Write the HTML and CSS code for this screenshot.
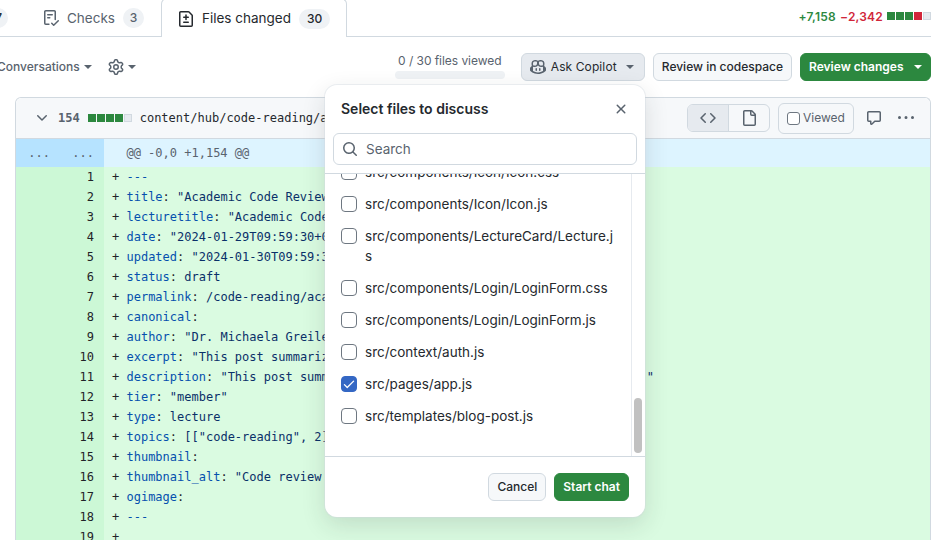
FILE: index.html
```html
<!DOCTYPE html>
<html lang="en">

<head>
    <meta charset="UTF-8">
    <meta name="viewport" content="width=device-width, initial-scale=1.0">
    <title>Files changed</title>
    <link rel="stylesheet" href="styles.css">
</head>

<body>
    <div class="page">
        <div class="tabbar">
            <span class="counter clipped">7</span>
            <div class="tab">
                <svg class="icon" viewBox="0 0 16 16"><path d="M2.5 1.75v11.5c0 .138.112.25.25.25h3.17a.75.75 0 0 1 0 1.5H2.75A1.75 1.75 0 0 1 1 13.25V1.75C1 .784 1.784 0 2.75 0h8.5C12.216 0 13 .784 13 1.75v7.736a.75.75 0 0 1-1.5 0V1.75a.25.25 0 0 0-.25-.25h-8.5a.25.25 0 0 0-.25.25Zm13.274 9.537v-.001l-4.557 4.45a.75.75 0 0 1-1.055-.008l-1.943-1.95a.75.75 0 0 1 1.062-1.058l1.419 1.425 4.026-3.932a.75.75 0 1 1 1.048 1.074ZM4.75 4h4.5a.75.75 0 0 1 0 1.5h-4.5a.75.75 0 0 1 0-1.5ZM4 7.75A.75.75 0 0 1 4.75 7h2a.75.75 0 0 1 0 1.5h-2A.75.75 0 0 1 4 7.75Z"/></svg>
                <span>Checks</span>
                <span class="counter">3</span>
            </div>
            <div class="tab selected">
                <svg class="icon" viewBox="0 0 16 16"><path d="M1 1.75C1 .784 1.784 0 2.75 0h7.586c.464 0 .909.184 1.237.513l2.914 2.914c.329.328.513.773.513 1.237v9.586A1.75 1.75 0 0 1 13.25 16H2.75A1.75 1.75 0 0 1 1 14.25Zm1.75-.25a.25.25 0 0 0-.25.25v12.5c0 .138.112.25.25.25h10.5a.25.25 0 0 0 .25-.25V4.664a.25.25 0 0 0-.073-.177l-2.914-2.914a.25.25 0 0 0-.177-.073ZM8 3.25a.75.75 0 0 1 .75.75v1.5h1.5a.75.75 0 0 1 0 1.5h-1.5v1.5a.75.75 0 0 1-1.5 0V7h-1.5a.75.75 0 0 1 0-1.5h1.5V4A.75.75 0 0 1 8 3.25Zm-3 8a.75.75 0 0 1 .75-.75h4.5a.75.75 0 0 1 0 1.5h-4.5a.75.75 0 0 1-.75-.75Z"/></svg>
                <span class="btn-text">Files changed</span>
                <span class="counter">30</span>
            </div>
            <div class="stats">
                <span class="plus">+7,158</span>
                <span class="minus">−2,342</span>
                <span class="bars">
                    <i class="g"></i><i class="g"></i><i class="g"></i><i class="r"></i><i></i>
                </span>
            </div>
        </div>

        <div class="toolbar">
            <span class="conv">Conversations<b class="caret"></b></span>
            <span class="gear">
                <svg class="icon" viewBox="0 0 16 16"><path d="M8 0a8.2 8.2 0 0 1 .701.031C9.444.095 9.99.645 10.16 1.29l.288 1.107c.018.066.079.158.212.224.231.114.454.243.668.386.123.082.233.09.299.071l1.103-.303c.644-.176 1.392.021 1.82.63.27.385.506.792.704 1.218.315.675.111 1.422-.364 1.891l-.814.806c-.049.048-.098.147-.088.294.016.257.016.515 0 .772-.01.147.038.246.088.294l.814.806c.475.469.679 1.216.364 1.891a7.977 7.977 0 0 1-.704 1.217c-.428.61-1.176.807-1.82.63l-1.102-.302c-.067-.019-.177-.011-.3.071a5.909 5.909 0 0 1-.668.386c-.133.066-.194.158-.211.224l-.29 1.106c-.168.646-.715 1.196-1.458 1.26a8.006 8.006 0 0 1-1.402 0c-.743-.064-1.289-.614-1.458-1.26l-.289-1.106c-.018-.066-.079-.158-.212-.224a5.738 5.738 0 0 1-.668-.386c-.123-.082-.233-.09-.299-.071l-1.103.303c-.644.176-1.392-.021-1.82-.63a8.12 8.12 0 0 1-.704-1.218c-.315-.675-.111-1.422.363-1.891l.815-.806c.05-.048.098-.147.088-.294a6.214 6.214 0 0 1 0-.772c.01-.147-.038-.246-.088-.294l-.815-.806C.635 6.045.431 5.298.746 4.623a7.92 7.92 0 0 1 .704-1.217c.428-.61 1.176-.807 1.82-.63l1.102.302c.067.019.177.011.3-.071.214-.143.437-.272.668-.386.133-.066.194-.158.211-.224l.29-1.106C6.009.645 6.556.095 7.299.03 7.53.01 7.764 0 8 0Zm-.571 1.525c-.036.003-.108.036-.137.146l-.289 1.105c-.147.561-.549.967-.998 1.189-.173.086-.34.183-.5.29-.417.278-.97.423-1.529.27l-1.103-.303c-.109-.03-.175.016-.195.045-.22.312-.412.644-.573.99-.014.031-.021.11.059.19l.815.806c.411.406.562.957.53 1.456a4.709 4.709 0 0 0 0 .582c.032.499-.119 1.05-.53 1.456l-.815.806c-.081.08-.073.159-.059.19.162.346.353.677.573.989.02.03.085.076.195.046l1.102-.303c.56-.153 1.113-.008 1.53.27.161.107.328.204.501.29.447.222.85.629.997 1.189l.289 1.105c.029.109.101.143.137.146a6.6 6.6 0 0 0 1.142 0c.036-.003.108-.036.137-.146l.289-1.105c.147-.561.549-.967.998-1.189.173-.086.34-.183.5-.29.417-.278.97-.423 1.529-.27l1.103.303c.109.029.175-.016.195-.045.22-.313.411-.644.573-.99.014-.031.021-.11-.059-.19l-.815-.806c-.411-.406-.562-.957-.53-1.456a4.709 4.709 0 0 0 0-.582c-.032-.499.119-1.05.53-1.456l.815-.806c.081-.08.073-.159.059-.19a6.464 6.464 0 0 0-.573-.989c-.02-.03-.085-.076-.195-.046l-1.102.303c-.56.153-1.113.008-1.53-.27a4.44 4.44 0 0 0-.501-.29c-.447-.222-.85-.629-.997-1.189l-.289-1.105c-.029-.11-.101-.143-.137-.146a6.6 6.6 0 0 0-1.142 0ZM11 8a3 3 0 1 1-6 0 3 3 0 0 1 6 0ZM9.5 8a1.5 1.5 0 1 0-3.001.001A1.5 1.5 0 0 0 9.5 8Z"/></svg>
                <b class="caret"></b>
            </span>
            <div class="progress">
                <span>0 / 30 files viewed</span>
                <div class="track"></div>
            </div>
            <button class="btn open copilot">
                <svg class="icon" viewBox="0 0 16 16"><path d="M7.998 15.035c-4.562 0-7.873-2.914-7.998-3.749V9.338c.085-.628.677-1.686 1.588-2.065.013-.07.024-.143.036-.218.029-.183.06-.384.126-.612-.201-.508-.254-1.084-.254-1.656 0-.87.128-1.769.693-2.484.579-.733 1.494-1.124 2.724-1.261 1.206-.134 2.262.034 2.944.765.05.053.096.108.139.165.044-.057.094-.112.143-.165.682-.731 1.738-.899 2.944-.765 1.23.137 2.145.528 2.724 1.261.566.715.693 1.614.693 2.484 0 .572-.053 1.148-.254 1.656.066.228.098.429.126.612.012.076.024.148.037.218.924.385 1.522 1.471 1.591 2.095v1.872c0 .766-3.351 3.795-8.002 3.795Zm0-1.485c2.28 0 4.584-1.11 5.002-1.433V7.862l-.023-.116c-.49.21-1.075.291-1.727.291-1.146 0-2.059-.327-2.71-.991A3.222 3.222 0 0 1 8 6.303a3.24 3.24 0 0 1-.544.743c-.65.664-1.563.991-2.71.991-.652 0-1.236-.081-1.727-.291l-.023.116v4.255c.419.323 2.722 1.433 5.002 1.433ZM6.762 2.83c-.193-.206-.637-.413-1.682-.297-1.019.113-1.479.404-1.713.7-.247.312-.369.789-.369 1.554 0 .793.129 1.171.308 1.371.162.181.519.379 1.442.379.853 0 1.339-.235 1.638-.54.315-.322.527-.827.617-1.553.117-.935-.037-1.395-.241-1.614Zm4.155-.297c-1.044-.116-1.488.091-1.681.297-.204.219-.359.679-.242 1.614.091.726.303 1.231.618 1.553.299.305.784.54 1.638.54.922 0 1.28-.198 1.442-.379.179-.2.308-.578.308-1.371 0-.765-.123-1.242-.37-1.554-.233-.296-.693-.587-1.713-.7Z M6.25 9.037a.75.75 0 0 1 .75.75v1.501a.75.75 0 0 1-1.5 0V9.787a.75.75 0 0 1 .75-.75Zm4.25.75v1.501a.75.75 0 0 1-1.5 0V9.787a.75.75 0 0 1 1.5 0Z"/></svg>
                <span class="btn-text">Ask Copilot</span><b class="caret"></b>
            </button>
            <button class="btn"><span class="btn-text">Review in codespace</span></button>
            <button class="btn green review"><span class="btn-text">Review changes</span><b class="caret"></b></button>
        </div>

        <div class="file">
            <div class="file-head">
                <svg class="icon chevron" viewBox="0 0 16 16"><path d="M12.78 5.22a.749.749 0 0 1 0 1.06l-4.25 4.25a.749.749 0 0 1-1.06 0L3.22 6.28a.749.749 0 1 1 1.06-1.06L8 8.939l3.72-3.719a.749.749 0 0 1 1.06 0Z"/></svg>
                <span class="num">154</span>
                <span class="bars"><i class="g"></i><i class="g"></i><i class="g"></i><i class="g"></i><i></i></span>
                <span class="path">content/hub/code-reading/academic-code-review.md</span>
                <div class="seg">
                    <span class="on"><svg class="icon" viewBox="0 0 16 16"><path d="m11.28 3.22 4.25 4.25a.75.75 0 0 1 0 1.06l-4.25 4.25a.749.749 0 0 1-1.275-.326.749.749 0 0 1 .215-.734L13.94 8l-3.72-3.72a.749.749 0 0 1 .326-1.275.749.749 0 0 1 .734.215Zm-6.56 0a.751.751 0 0 1 1.042.018.751.751 0 0 1 .018 1.042L2.06 8l3.72 3.72a.749.749 0 0 1-.326 1.275.749.749 0 0 1-.734-.215L.47 8.53a.75.75 0 0 1 0-1.06Z"/></svg></span>
                    <span><svg class="icon" viewBox="0 0 16 16"><path d="M2 1.75C2 .784 2.784 0 3.75 0h6.586c.464 0 .909.184 1.237.513l2.914 2.914c.329.328.513.773.513 1.237v9.586A1.75 1.75 0 0 1 13.25 16h-9.5A1.75 1.75 0 0 1 2 14.25Zm1.75-.25a.25.25 0 0 0-.25.25v12.5c0 .138.112.25.25.25h9.5a.25.25 0 0 0 .25-.25V6h-2.75A1.75 1.75 0 0 1 9 4.25V1.5Zm6.75.062V4.25c0 .138.112.25.25.25h2.688l-.011-.013-2.914-2.914-.013-.011Z"/></svg></span>
                </div>
                <div class="viewed"><span class="box small"></span><span class="btn-text">Viewed</span></div>
                <svg class="icon comment" viewBox="0 0 16 16"><path d="M1 2.75C1 1.784 1.784 1 2.75 1h10.5c.966 0 1.75.784 1.75 1.75v7.5A1.75 1.75 0 0 1 13.25 12H9.06l-2.573 2.573A1.458 1.458 0 0 1 4 13.543V12H2.75A1.75 1.75 0 0 1 1 10.25Zm1.75-.25a.25.25 0 0 0-.25.25v7.5c0 .138.112.25.25.25h2a.75.75 0 0 1 .75.75v2.19l2.72-2.72a.749.749 0 0 1 .53-.22h4.5a.25.25 0 0 0 .25-.25v-7.5a.25.25 0 0 0-.25-.25Z"/></svg>
                <svg class="icon kebab" viewBox="0 0 16 16"><path d="M8 9a1.5 1.5 0 1 0 0-3 1.5 1.5 0 0 0 0 3ZM1.5 9a1.5 1.5 0 1 0 0-3 1.5 1.5 0 0 0 0 3Zm13 0a1.5 1.5 0 1 0 0-3 1.5 1.5 0 0 0 0 3Z"/></svg>
            </div>

            <div class="row hunk"><span class="n">...</span><span class="n">...</span><span class="code">  @@ -0,0 +1,154 @@</span></div>
            <div class="row"><span class="n"></span><span class="n">1</span><span class="code"><i>+</i> <em>---</em></span></div>
            <div class="row"><span class="n"></span><span class="n">2</span><span class="code"><i>+</i> <em>title</em><i>:</i> "Academic Code Review"</span></div>
            <div class="row"><span class="n"></span><span class="n">3</span><span class="code"><i>+</i> <em>lecturetitle</em><i>:</i> "Academic Code Review"</span></div>
            <div class="row"><span class="n"></span><span class="n">4</span><span class="code"><i>+</i> <em>date</em><i>:</i> "2024-01-29T09:59:30+01:00"</span></div>
            <div class="row"><span class="n"></span><span class="n">5</span><span class="code"><i>+</i> <em>updated</em><i>:</i> "2024-01-30T09:59:30+01:00"</span></div>
            <div class="row"><span class="n"></span><span class="n">6</span><span class="code"><i>+</i> <em>status</em><i>:</i> draft</span></div>
            <div class="row"><span class="n"></span><span class="n">7</span><span class="code"><i>+</i> <em>permalink</em><i>:</i> /code-reading/academic-code-review</span></div>
            <div class="row"><span class="n"></span><span class="n">8</span><span class="code"><i>+</i> <em>canonical</em><i>:</i></span></div>
            <div class="row"><span class="n"></span><span class="n">9</span><span class="code"><i>+</i> <em>author</em><i>:</i> "Dr. Michaela Greiler"</span></div>
            <div class="row"><span class="n"></span><span class="n">10</span><span class="code"><i>+</i> <em>excerpt</em><i>:</i> "This post summarizes the lecture in short"</span></div>
            <div class="row"><span class="n"></span><span class="n">11</span><span class="code"><i>+</i> <em>description</em><i>:</i> "This post summarizes the code reading lecture in this hub."</span></div>
            <div class="row"><span class="n"></span><span class="n">12</span><span class="code"><i>+</i> <em>tier</em><i>:</i> "member"</span></div>
            <div class="row"><span class="n"></span><span class="n">13</span><span class="code"><i>+</i> <em>type</em><i>:</i> lecture</span></div>
            <div class="row"><span class="n"></span><span class="n">14</span><span class="code"><i>+</i> <em>topics</em><i>:</i> [["code-reading", 2]]</span></div>
            <div class="row"><span class="n"></span><span class="n">15</span><span class="code"><i>+</i> <em>thumbnail</em><i>:</i></span></div>
            <div class="row"><span class="n"></span><span class="n">16</span><span class="code"><i>+</i> <em>thumbnail_alt</em><i>:</i> "Code review lecture"</span></div>
            <div class="row"><span class="n"></span><span class="n">17</span><span class="code"><i>+</i> <em>ogimage</em><i>:</i></span></div>
            <div class="row"><span class="n"></span><span class="n">18</span><span class="code"><i>+</i> <em>---</em></span></div>
            <div class="row"><span class="n"></span><span class="n">19</span><span class="code"><i>+</i></span></div>
        </div>
    </div>

    <div class="popover">
        <div class="pop-head">
            <h2>Select files to discuss</h2>
            <svg class="icon" viewBox="0 0 16 16"><path d="M3.72 3.72a.75.75 0 0 1 1.06 0L8 6.94l3.22-3.22a.749.749 0 0 1 1.275.326.749.749 0 0 1-.215.734L9.06 8l3.22 3.22a.749.749 0 0 1-.326 1.275.749.749 0 0 1-.734-.215L8 9.06l-3.22 3.22a.751.751 0 0 1-1.042-.018.751.751 0 0 1-.018-1.042L6.94 8 3.72 4.78a.75.75 0 0 1 0-1.06Z"/></svg>
        </div>
        <div class="search-wrap">
            <div class="search">
                <svg class="icon" viewBox="0 0 16 16"><path d="M10.68 11.74a6 6 0 0 1-7.922-8.982 6 6 0 0 1 8.982 7.922l3.04 3.04a.749.749 0 0 1-.326 1.275.749.749 0 0 1-.734-.215ZM11.5 7a4.499 4.499 0 1 0-8.997 0A4.499 4.499 0 0 0 11.5 7Z"/></svg>
                <span>Search</span>
            </div>
        </div>
        <div class="scroll">
            <div class="list-view">
                <ul class="list">
                    <li><span class="box"></span><span>src/components/Icon/Icon.css</span></li>
                    <li><span class="box"></span><span>src/components/Icon/Icon.js</span></li>
                    <li><span class="box"></span><span>src/components/LectureCard/Lecture.js</span></li>
                    <li><span class="box"></span><span>src/components/Login/LoginForm.css</span></li>
                    <li><span class="box"></span><span>src/components/Login/LoginForm.js</span></li>
                    <li><span class="box"></span><span>src/context/auth.js</span></li>
                    <li>
                        <span class="box checked"><svg viewBox="0 0 16 16"><path d="M13.78 4.22a.75.75 0 0 1 0 1.06l-7.25 7.25a.75.75 0 0 1-1.06 0L2.22 9.28a.751.751 0 0 1 .018-1.042.751.751 0 0 1 1.042-.018L6 10.94l6.72-6.72a.75.75 0 0 1 1.06 0Z"/></svg></span>
                        <span>src/pages/app.js</span>
                    </li>
                    <li><span class="box"></span><span>src/templates/blog-post.js</span></li>
                </ul>
            </div>
            <div class="scrollbar"><div class="thumb"></div></div>
        </div>
        <div class="pop-foot">
            <button class="btn"><span class="btn-text">Cancel</span></button>
            <button class="btn green"><span class="btn-text">Start chat</span></button>
        </div>
    </div>
</body>

</html>
```

FILE: styles.css
```css
* {
    margin: 0;
    padding: 0;
    box-sizing: border-box;
}

html,
body {
    height: 540px;
    overflow: hidden;
}

body {
    position: relative;
    background-color: white;
    color: #25292e;
    font-family: Inter, "Liberation Sans", sans-serif;
    font-size: 13.5px;
}

.page {
    padding-right: 3px;
}

.icon {
    width: 16px;
    height: 16px;
    fill: currentColor;
    flex: none;
}

.btn-text {
    position: relative;
    top: -1px;
}

/* tabs */
.tabbar {
    height: 37px;
    display: flex;
    align-items: center;
    border-bottom: 1px solid #d1d9e0;
}

.counter {
    display: inline-block;
    min-width: 21px;
    height: 20px;
    padding: 0 8px;
    border-radius: 10px;
    background-color: #eff2f5;
    font-size: 12px;
    font-weight: 500;
    line-height: 20px;
    text-align: center;
}

.counter.clipped {
    width: 24px;
    margin-left: -16px;
    padding: 0 6px 0 0;
    text-align: right;
}

.tab {
    display: flex;
    align-items: center;
    gap: 8px;
    height: 37px;
    padding: 0 17px;
    color: #59636e;
}

.tab:first-of-type {
    margin-left: 18px;
}

.tab .counter {
    padding: 0 6px;
    color: #59636e;
}

.tab.selected {
    height: 39px;
    margin: -2px 0 -1px 0;
    padding: 1px 16px 0;
    background-color: white;
    border: 1px solid #d1d9e0;
    border-bottom: 0;
    border-radius: 6px 6px 0 0;
    color: #25292e;
}

.tab.selected .counter {
    padding: 0 8px;
    color: #25292e;
}

.stats {
    margin-left: auto;
    padding-bottom: 4px;
    display: flex;
    align-items: center;
    gap: 4px;
    font-size: 12px;
    font-weight: 600;
    letter-spacing: 0.2px;
}

.plus {
    color: #2c883f;
}

.minus {
    color: #d1263a;
}

.bars {
    display: inline-flex;
    gap: 1px;
}

.bars i {
    width: 8px;
    height: 8px;
    background-color: #e6eaef;
    border: 1px solid #d1d9e0;
}

.bars i.g {
    background-color: #2c883f;
    border: 0;
}

.bars i.r {
    background-color: #d1263a;
    border: 0;
}

/* toolbar */
.toolbar {
    height: 60px;
    display: flex;
    align-items: center;
    color: #59636e;
    font-size: 12px;
}

.caret {
    display: inline-block;
    width: 0;
    height: 0;
    margin-left: 4px;
    vertical-align: middle;
    border-top: 4px solid currentColor;
    border-left: 4px solid transparent;
    border-right: 4px solid transparent;
}

.conv {
    margin-left: -3px;
    padding-bottom: 2px;
    font-weight: 500;
    white-space: nowrap;
}

.gear {
    display: flex;
    align-items: center;
    margin-left: 16px;
}

.progress {
    width: 110px;
    margin-left: auto;
    margin-right: 16px;
    display: flex;
    flex-direction: column;
    align-items: center;
    gap: 3px;
    margin-top: -2px;
    letter-spacing: -0.05px;
}

.track {
    width: 100%;
    height: 8px;
    border-radius: 4px;
    background-color: #eff2f5;
}

.btn {
    height: 28px;
    padding: 0 8px;
    border: 1px solid #d1d9e0;
    border-radius: 6px;
    background-color: #f6f8fa;
    color: #25292e;
    font-family: inherit;
    font-size: 12px;
    font-weight: 500;
    white-space: nowrap;
}

.toolbar .btn {
    margin-left: 8px;
}

.toolbar .btn:first-of-type {
    margin-left: 0;
}

.btn.open {
    background-color: #e6eaef;
}

.copilot {
    display: flex;
    align-items: center;
    width: 124px;
    gap: 4px;
}

.copilot .icon {
    color: #59636e;
    margin-right: 1px;
}

.copilot .btn-text {
    font-weight: 400;
    letter-spacing: 0.1px;
}

.copilot .caret {
    margin-left: 5px;
    color: #59636e;
}

.btn.green {
    background-color: #2c883f;
    border-color: #2c883f;
    color: white;
    font-weight: 600;
}

.review {
    width: 131px;
    display: flex;
    align-items: center;
    justify-content: space-between;
}

.review .caret {
    color: white;
}

/* diff */
.file {
    margin-left: 15px;
    border: 1px solid #d1d9e0;
    border-bottom: 0;
    border-radius: 6px 6px 0 0;
    font-family: "DejaVu Sans Mono", "Liberation Mono", monospace;
    font-size: 12px;
}

.file-head {
    height: 41px;
    display: flex;
    align-items: center;
    padding-right: 16px;
    background-color: #f6f8fa;
    border-bottom: 1px solid #d1d9e0;
    border-radius: 6px 6px 0 0;
}

.chevron {
    margin-left: 18px;
    color: #59636e;
}

.num {
    margin-left: 8px;
    color: #59636e;
    font-weight: bold;
}

.file-head .bars {
    margin-left: 8px;
}

.file-head .path {
    margin-left: 8px;
    white-space: nowrap;
    flex: 1;
    overflow: hidden;
}

.seg {
    display: flex;
    height: 28px;
    margin-left: 8px;
    border: 1px solid #d1d9e0;
    border-radius: 6px;
    color: #59636e;
}

.seg span {
    width: 40px;
    display: flex;
    align-items: center;
    justify-content: center;
}

.seg .on {
    width: 41px;
    background-color: #e6eaef;
    border-right: 1px solid #d1d9e0;
    border-radius: 5px 0 0 5px;
}

.viewed {
    display: flex;
    align-items: center;
    gap: 3px;
    width: 76px;
    height: 31px;
    margin-left: 8px;
    padding: 0 8px;
    border: 1px solid #d1d9e0;
    border-radius: 6px;
    color: #59636e;
    font-family: Inter, "Liberation Sans", sans-serif;
}

.comment {
    margin-left: 12px;
    color: #59636e;
}

.kebab {
    margin-left: 16px;
    color: #59636e;
}

.row {
    display: flex;
    height: 20px;
    line-height: 20px;
    background-color: #dafbe1;
    color: #1f2328;
}

.row .n {
    width: 44px;
    flex: none;
    padding-right: 10px;
    text-align: right;
    background-color: #ccf8d6;
}

.row .code {
    padding-left: 8px;
    white-space: pre;
    color: #0a3069;
}

.row i {
    font-style: normal;
    color: #1f2328;
}

.row em {
    font-style: normal;
    color: #0550ae;
}

.hunk {
    height: 28px;
    line-height: 28px;
    background-color: #ddf4ff;
    color: #59636e;
}

.hunk .n {
    background-color: #b6e3ff;
}

.hunk .code {
    color: #59636e;
}

/* popover */
.popover {
    position: absolute;
    top: 85px;
    left: 325px;
    width: 320px;
    height: 432px;
    display: flex;
    flex-direction: column;
    background-color: white;
    border-radius: 12px;
    box-shadow: 0 0 0 1px rgba(209, 217, 224, 0.4), 0 8px 24px rgba(37, 41, 46, 0.14);
    overflow: hidden;
}

.pop-head {
    display: flex;
    align-items: center;
    justify-content: space-between;
    padding: 14px 16px;
}

.pop-head h2 {
    font-size: 14px;
    font-weight: 600;
    line-height: 20px;
}

.pop-head .icon {
    color: #59636e;
}

.search-wrap {
    padding: 0 8px 8px;
    border-bottom: 1px solid #d1d9e0;
}

.search {
    height: 32px;
    display: flex;
    align-items: center;
    gap: 8px;
    padding: 0 8px;
    border: 1px solid #d1d9e0;
    border-radius: 6px;
    color: #59636e;
}

.scroll {
    flex: 1;
    display: flex;
    min-height: 0;
}

.list-view {
    flex: 1;
    overflow: hidden;
}

.list {
    list-style: none;
    display: flex;
    flex-direction: column;
    gap: 12px;
    margin-top: -12px;
    padding: 0 14px 0 16px;
    line-height: 20px;
    word-break: break-all;
}

.list li {
    display: flex;
    gap: 8px;
}

.box {
    width: 16px;
    height: 16px;
    flex: none;
    margin-top: 2px;
    display: flex;
    background-color: white;
    border: 1px solid #6e7781;
    border-radius: 4px;
}

.box.small {
    width: 13px;
    height: 13px;
    margin-top: 0;
    border-radius: 3px;
}

.box.checked {
    background-color: #3467c4;
    border-color: #3467c4;
    fill: white;
}

.scrollbar {
    width: 14px;
    flex: none;
    display: flex;
    flex-direction: column;
    justify-content: flex-end;
    padding: 0 3px 3px 2px;
    border-left: 1px solid #e6eaef;
}

.thumb {
    height: 55px;
    border-radius: 4px;
    background-color: #c1c1c1;
}

.pop-foot {
    height: 61px;
    display: flex;
    align-items: center;
    justify-content: flex-end;
    gap: 8px;
    padding: 0 16px;
    border-top: 1px solid #d1d9e0;
}
```
